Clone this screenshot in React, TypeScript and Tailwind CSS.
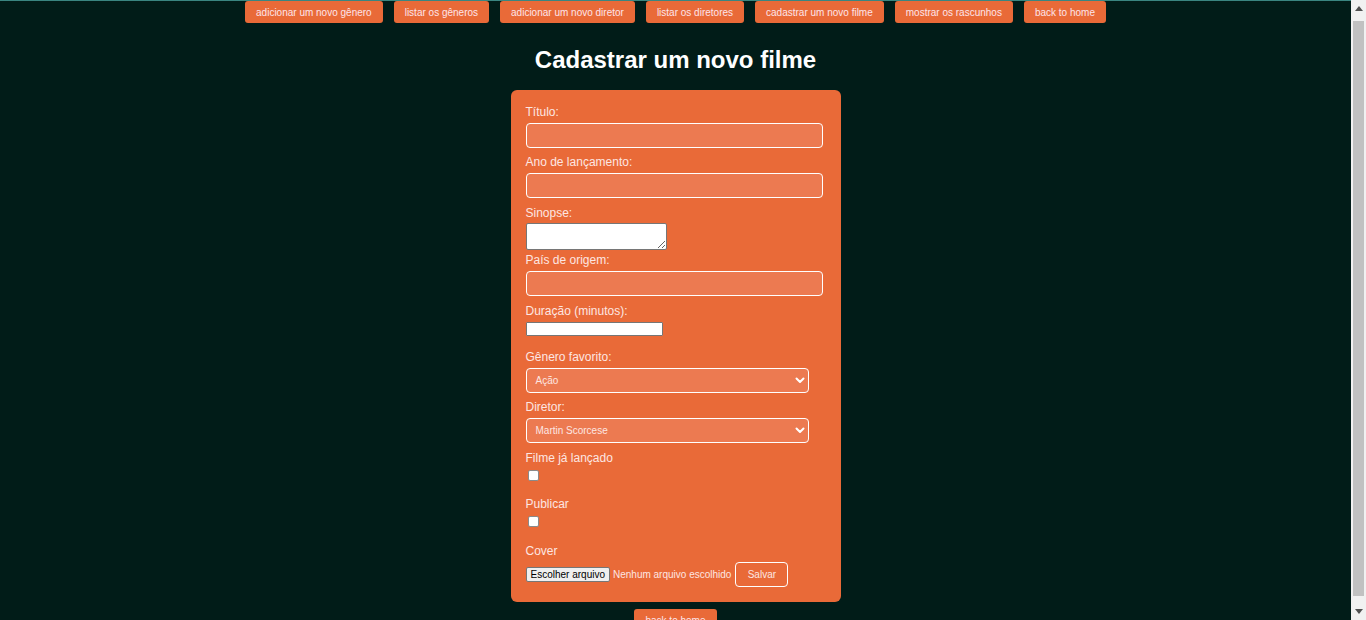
import React from "react";

const navItems = [
  "adicionar um novo gênero",
  "listar os gêneros",
  "adicionar um novo diretor",
  "listar os diretores",
  "cadastrar um novo filme",
  "mostrar os rascunhos",
  "back to home",
];

function Chevron() {
  return (
    <svg width="10" height="7" viewBox="0 0 10 7" className="pointer-events-none absolute right-[4px] top-[9px]">
      <path d="M1.5 1.5 L5 5 L8.5 1.5" fill="none" stroke="#ffffff" strokeWidth="2" strokeLinecap="round" strokeLinejoin="round" />
    </svg>
  );
}

function Label({ children, className = "" }: { children: React.ReactNode; className?: string }) {
  return (
    <label className={`block h-[16px] pt-[2px] text-[12px] leading-[14px] text-[#fde6e2] ${className}`}>
      {children}
    </label>
  );
}

function TextInput({ className = "" }: { className?: string }) {
  return (
    <input
      type="text"
      className={`block w-[297px] h-[25px] rounded-[4px] border border-white bg-[#ec7a51] outline-none ${className}`}
    />
  );
}

function Select({ value, className = "" }: { value: string; className?: string }) {
  return (
    <div className={`relative w-[283px] h-[25px] ${className}`}>
      <div className="flex h-full w-full items-center rounded-[4px] border border-white bg-[#ec7a51] pl-[9px] text-[10px] text-[#fde6e2]">
        {value}
      </div>
      <Chevron />
    </div>
  );
}

function Checkbox({ className = "" }: { className?: string }) {
  return <span className={`block w-[11px] h-[11px] ml-[2px] rounded-[2px] border border-[#8a8a8a] bg-white ${className}`} />;
}

function Scrollbar() {
  return (
    <div className="flex h-full w-[15px] shrink-0 flex-col items-center bg-[#f1f1f1]">
      <div className="flex h-[17px] w-full items-center justify-center">
        <svg width="8" height="5" viewBox="0 0 8 5">
          <path d="M0 5 L4 0 L8 5 Z" fill="#505050" />
        </svg>
      </div>
      <div className="mt-[4px] w-[11px] flex-1 bg-[#c1c1c1]" />
      <div className="mt-[7px] flex h-[17px] w-full items-center justify-center">
        <svg width="8" height="5" viewBox="0 0 8 5">
          <path d="M0 0 L8 0 L4 5 Z" fill="#505050" />
        </svg>
      </div>
    </div>
  );
}

export default function App() {
  return (
    <div className="flex h-screen overflow-hidden" style={{ fontFamily: '"Liberation Sans", Arial, sans-serif' }}>
      <main className="min-w-0 flex-1 overflow-hidden bg-[#011c18] border-t border-[#3a8580] pb-[10px]">
        <nav className="flex justify-center gap-[11px] pl-[-1px]">
          {navItems.map((t) => (
            <button
              key={t}
              className="h-[22px] rounded-[3px] bg-[#e96a38] px-[11px] pt-[2px] text-[10px] leading-[12px] text-[#fde4ea]"
            >
              {t}
            </button>
          ))}
        </nav>

        <h1 className="mt-[23px] text-center text-[24px] font-bold leading-[28px] text-white">
          Cadastrar um novo filme
        </h1>

        <div className="mx-auto mt-[16px] w-[330px] rounded-[6px] bg-[#e96a38] px-[15px] pt-[13px] pb-[15px]">
          <Label>Título:</Label>
          <TextInput className="mt-[4px]" />

          <Label className="mt-[5px]">Ano de lançamento:</Label>
          <TextInput className="mt-[4px]" />

          <Label className="mt-[6px]">Sinopse:</Label>
          <textarea className="mt-[3px] block w-[141px] h-[27px] rounded-[2px] border border-[#767676] bg-white outline-none" />

          <Label className="mt-[1px]">País de origem:</Label>
          <TextInput className="mt-[4px]" />

          <Label className="mt-[6px]">Duração (minutos):</Label>
          <input
            type="text"
            className="mt-[4px] block w-[137px] h-[14px] rounded-[1px] border border-[#767676] bg-white outline-none"
          />

          <Label className="mt-[12px]">Gênero favorito:</Label>
          <Select value="Ação" className="mt-[4px]" />

          <Label className="mt-[5px]">Diretor:</Label>
          <Select value="Martin Scorcese" className="mt-[4px]" />

          <Label className="mt-[6px]">Filme já lançado</Label>
          <Checkbox className="mt-[5px]" />

          <Label className="mt-[14px]">Publicar</Label>
          <Checkbox className="mt-[5px]" />

          <Label className="mt-[15px]">Cover</Label>
          <div className="mt-[4px] flex items-center">
            <span className="flex h-[15px] items-center rounded-[2px] border border-[#767676] bg-[#efefef] px-[4px] text-[10px] text-black">
              Escolher arquivo
            </span>
            <span className="ml-[3px] text-[10px] text-[#fde6e2]">Nenhum arquivo escolhido</span>
            <button className="ml-[4px] h-[25px] w-[53px] rounded-[4px] border border-white text-[10px] text-[#fde6e2]">
              Salvar
            </button>
          </div>
        </div>

        <div className="mt-[7px] flex justify-center">
          <button className="h-[22px] rounded-[3px] bg-[#e96a38] px-[11px] pt-[2px] text-[10px] leading-[12px] text-[#fde4ea]">
            back to home
          </button>
        </div>
      </main>
      <Scrollbar />
    </div>
  );
}
